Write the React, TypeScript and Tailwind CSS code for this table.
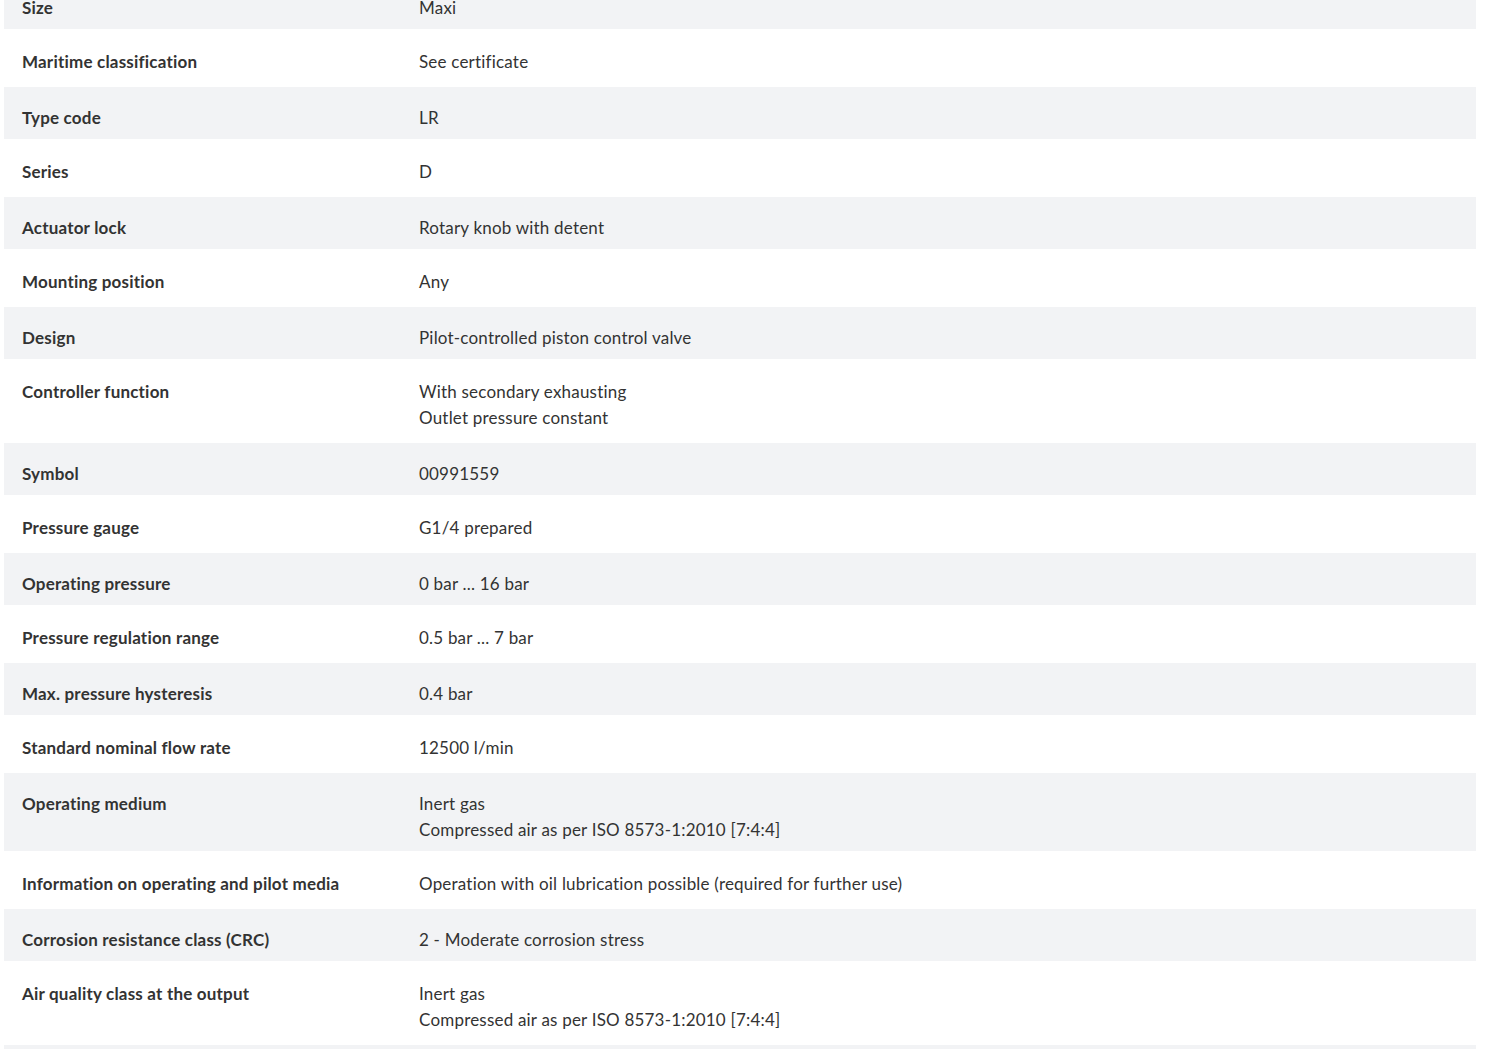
const rows: { label: string; values: string[] }[] = [
  { label: "Size", values: ["Maxi"] },
  { label: "Maritime classification", values: ["See certificate"] },
  { label: "Type code", values: ["LR"] },
  { label: "Series", values: ["D"] },
  { label: "Actuator lock", values: ["Rotary knob with detent"] },
  { label: "Mounting position", values: ["Any"] },
  { label: "Design", values: ["Pilot-controlled piston control valve"] },
  { label: "Controller function", values: ["With secondary exhausting", "Outlet pressure constant"] },
  { label: "Symbol", values: ["00991559"] },
  { label: "Pressure gauge", values: ["G1/4 prepared"] },
  { label: "Operating pressure", values: ["0 bar ... 16 bar"] },
  { label: "Pressure regulation range", values: ["0.5 bar ... 7 bar"] },
  { label: "Max. pressure hysteresis", values: ["0.4 bar"] },
  { label: "Standard nominal flow rate", values: ["12500 l/min"] },
  { label: "Operating medium", values: ["Inert gas", "Compressed air as per ISO 8573-1:2010 [7:4:4]"] },
  { label: "Information on operating and pilot media", values: ["Operation with oil lubrication possible (required for further use)"] },
  { label: "Corrosion resistance class (CRC)", values: ["2 - Moderate corrosion stress"] },
  { label: "Air quality class at the output", values: ["Inert gas", "Compressed air as per ISO 8573-1:2010 [7:4:4]"] },
  { label: "Temperature of medium", values: ["-10 °C ... 60 °C"] },
];

export default function App() {
  return (
    <div className="h-[1049px] overflow-hidden bg-white font-['Lato','Liberation_Sans',sans-serif] text-[17px] leading-[26px] tracking-[0.2px] text-[#333]">
      <div className="mt-[-23px] pl-[4px] pr-[24px]">
        {rows.map((row, i) => (
          <div
            key={row.label}
            className={
              i % 2 === 0
                ? "flex bg-[#f2f3f5] pt-[18px] pb-[8px]"
                : "flex bg-white pt-[20px] pb-[12px]"
            }
          >
            <div className="w-[415px] shrink-0 pl-[18px] font-bold">{row.label}</div>
            <div className="flex flex-col">
              {row.values.map((v) => (
                <span key={v}>{v}</span>
              ))}
            </div>
          </div>
        ))}
      </div>
    </div>
  );
}
